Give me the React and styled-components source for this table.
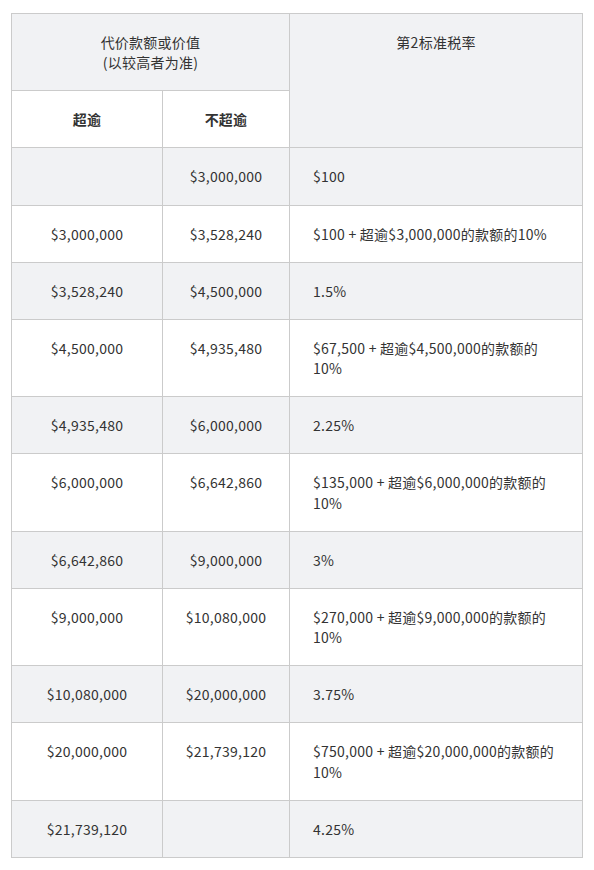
import styled, { createGlobalStyle } from "styled-components";

const GlobalStyle = createGlobalStyle`
  body {
    margin: 0;
    background: #fff;
    font-family: "Noto Sans CJK SC", "Noto Sans", sans-serif;
  }
`;

const Table = styled.table`
  border-collapse: collapse;
  table-layout: fixed;
  width: 571px;
  margin: 13px 0 0 11px;
  font-size: 14px;
  line-height: 20.15px;
  letter-spacing: 0.25px;
  color: #333;
`;

const HeadCell = styled.th`
  border: 1px solid #cbcbcb;
  background: ${({ light }) => (light ? "#fff" : "#f1f2f4")};
  font-weight: ${({ bold }) => (bold ? 700 : 400)};
  text-align: center;
  vertical-align: top;
  padding: 18px 12px 18px;
`;

const Row = styled.tr`
  background: ${({ shaded }) => (shaded ? "#f1f2f4" : "#fff")};
`;

const Cell = styled.td`
  border: 1px solid #cbcbcb;
  vertical-align: top;
  text-align: ${({ left }) => (left ? "left" : "center")};
  padding: ${({ left }) => (left ? "18px 21px 18px 23px" : "18px 10px")};
`;

const rows = [
  ["", "$3,000,000", "$100"],
  ["$3,000,000", "$3,528,240", "$100 + 超逾$3,000,000的款额的10%"],
  ["$3,528,240", "$4,500,000", "1.5%"],
  ["$4,500,000", "$4,935,480", "$67,500 + 超逾$4,500,000的款额的10%"],
  ["$4,935,480", "$6,000,000", "2.25%"],
  ["$6,000,000", "$6,642,860", "$135,000 + 超逾$6,000,000的款额的10%"],
  ["$6,642,860", "$9,000,000", "3%"],
  ["$9,000,000", "$10,080,000", "$270,000 + 超逾$9,000,000的款额的10%"],
  ["$10,080,000", "$20,000,000", "3.75%"],
  ["$20,000,000", "$21,739,120", "$750,000 + 超逾$20,000,000的款额的10%"],
  ["$21,739,120", "", "4.25%"],
];

export default function App() {
  return (
    <>
      <GlobalStyle />
      <Table>
        <colgroup>
          <col style={{ width: 151 }} />
          <col style={{ width: 127 }} />
          <col style={{ width: 293 }} />
        </colgroup>
        <thead>
          <tr>
            <HeadCell colSpan={2}>
              代价款额或价值
              <br />
              (以较高者为准)
            </HeadCell>
            <HeadCell rowSpan={2}>第2标准税率</HeadCell>
          </tr>
          <tr>
            <HeadCell light bold>超逾</HeadCell>
            <HeadCell light bold>不超逾</HeadCell>
          </tr>
        </thead>
        <tbody>
          {rows.map(([from, to, rate], i) => (
            <Row key={i} shaded={i % 2 === 0}>
              <Cell>{from}</Cell>
              <Cell>{to}</Cell>
              <Cell left>{rate}</Cell>
            </Row>
          ))}
        </tbody>
      </Table>
    </>
  );
}
